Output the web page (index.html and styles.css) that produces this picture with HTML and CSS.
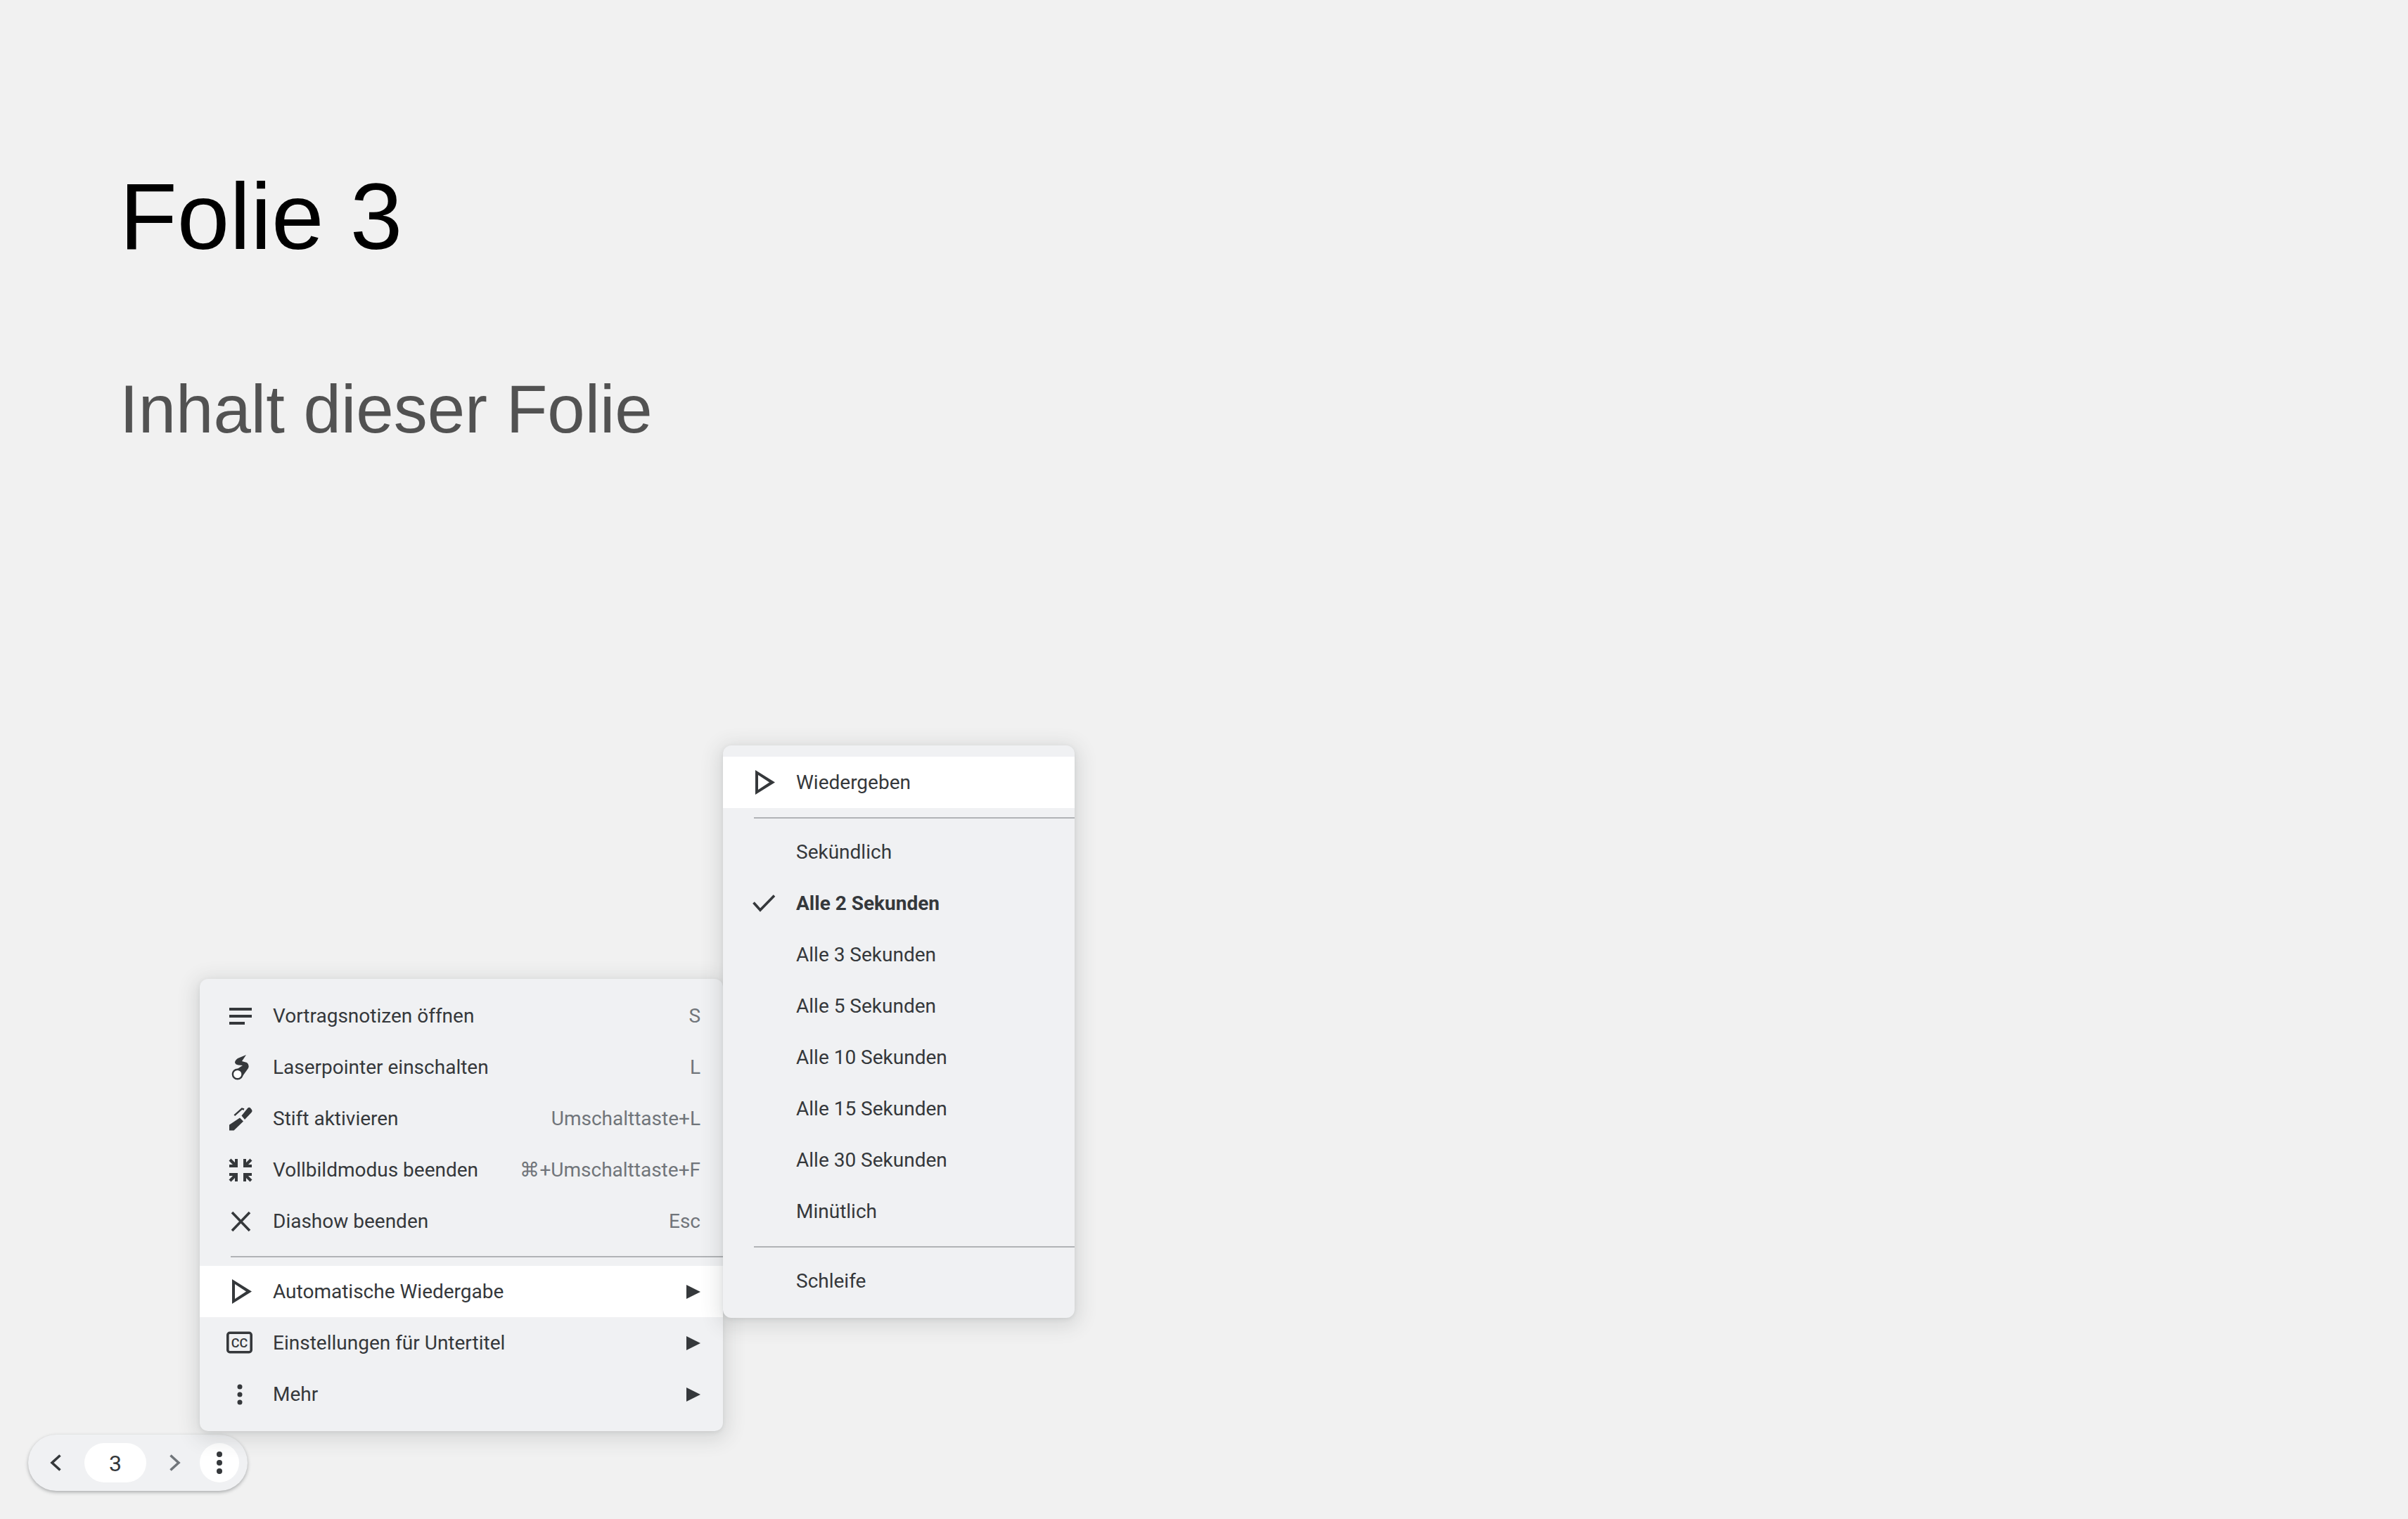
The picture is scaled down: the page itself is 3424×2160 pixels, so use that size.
FILE: index.html
```html
<!DOCTYPE html>
<html lang="de">
<head>
    <meta charset="UTF-8">
    <meta name="viewport" content="width=device-width, initial-scale=1.0">
    <title>Folie 3</title>
    <link rel="stylesheet" href="styles.css">
</head>
<body>
    <div class="slide">
        <h1>Folie 3</h1>
        <p>Inhalt dieser Folie</p>
    </div>

    <div class="nav-bar">
        <button class="nav-btn">
            <svg width="56" height="56" viewBox="0 0 56 56"><path class="line" d="M33.500 17.500 22 28l11.500 10.500"/></svg>
        </button>
        <div class="page-pill">3</div>
        <button class="nav-btn off">
            <svg width="56" height="56" viewBox="0 0 56 56"><path class="line" d="M22.500 17.500 34 28 22.500 38.500"/></svg>
        </button>
        <button class="nav-btn more">
            <svg width="56" height="56" viewBox="0 0 56 56"><circle class="fill" cx="28" cy="16" r="4"/><circle class="fill" cx="28" cy="28" r="4"/><circle class="fill" cx="28" cy="40" r="4"/></svg>
        </button>
    </div>

    <div class="menu main-menu">
        <div class="row">
            <span class="icon"><svg width="36" height="36" viewBox="0 0 36 36"><path class="fill" d="M2 6h32v4H2zM2 16h32v4H2zM2 26h22v4H2z"/></svg></span>
            <span class="label">Vortragsnotizen öffnen</span>
            <span class="key">S</span>
        </div>
        <div class="row">
            <span class="icon"><svg width="36" height="36" viewBox="0 0 36 36"><path class="fill" d="M26 0 14 5q-4 3-4 6 1 3 5 3.500l6 .5L9 23l10 10 10-14q2-5-2-8l-7-2z"/><circle cx="13.700" cy="27.500" r="6.800" fill="#fff" stroke="#35383b" stroke-width="2.400"/></svg></span>
            <span class="label">Laserpointer einschalten</span>
            <span class="key">L</span>
        </div>
        <div class="row">
            <span class="icon"><svg width="36" height="36" viewBox="0 0 36 36"><path class="fill" d="M2 34.500v-8l15-10 5 5-13.500 13zM19.500 13.500 28 3q2-2 4-.5L34 5q1.500 2-.5 4L24 19z"/><path class="line thin" d="M9.300 13.200 20 3.500l3 1"/></svg></span>
            <span class="label">Stift aktivieren</span>
            <span class="key">Umschalttaste+L</span>
        </div>
        <div class="row">
            <span class="icon"><svg width="36" height="36" viewBox="0 0 36 36"><path class="fill" d="M14 2v12H2v-4h5L1.500 4.500l3-3L10 7V2z"/><path class="fill" transform="matrix(-1 0 0 1 36 0)" d="M14 2v12H2v-4h5L1.500 4.500l3-3L10 7V2z"/><path class="fill" transform="matrix(1 0 0 -1 0 36)" d="M14 2v12H2v-4h5L1.500 4.500l3-3L10 7V2z"/><path class="fill" transform="matrix(-1 0 0 -1 36 36)" d="M14 2v12H2v-4h5L1.500 4.500l3-3L10 7V2z"/></svg></span>
            <span class="label">Vollbildmodus beenden</span>
            <span class="key">⌘+Umschalttaste+F</span>
        </div>
        <div class="row">
            <span class="icon"><svg width="36" height="36" viewBox="0 0 36 36"><path class="line" d="m6 5 25 26M31 5 6 31"/></svg></span>
            <span class="label">Diashow beenden</span>
            <span class="key">Esc</span>
        </div>
        <div class="divider"></div>
        <div class="row active">
            <span class="icon"><svg width="36" height="36" viewBox="0 0 36 36"><path class="fill" fill-rule="evenodd" d="M6 0v35l28-17.500zM10 7l16 10.500L10 28z"/></svg></span>
            <span class="label">Automatische Wiedergabe</span>
            <svg class="arrow" width="20" height="20" viewBox="0 0 20 20"><path class="fill" d="M0 0v20l20-10z"/></svg>
        </div>
        <div class="row">
            <span class="icon"><svg width="36" height="36" viewBox="0 0 36 36"><rect x="-0.200" y="3.300" width="33.400" height="27.400" rx="3" fill="none" stroke="#35383b" stroke-width="3.600"/><text class="cc" x="16.500" y="23.500" text-anchor="middle">CC</text></svg></span>
            <span class="label">Einstellungen für Untertitel</span>
            <svg class="arrow" width="20" height="20" viewBox="0 0 20 20"><path class="fill" d="M0 0v20l20-10z"/></svg>
        </div>
        <div class="row">
            <span class="icon"><svg width="36" height="36" viewBox="0 0 36 36"><circle class="fill" cx="17" cy="7" r="3.500"/><circle class="fill" cx="17" cy="18" r="3.500"/><circle class="fill" cx="17" cy="29" r="3.500"/></svg></span>
            <span class="label">Mehr</span>
            <svg class="arrow" width="20" height="20" viewBox="0 0 20 20"><path class="fill" d="M0 0v20l20-10z"/></svg>
        </div>
    </div>

    <div class="menu sub-menu">
        <div class="row active">
            <span class="icon"><svg width="36" height="36" viewBox="0 0 36 36"><path class="fill" fill-rule="evenodd" d="M6 0v35l28-17.500zM10 7l16 10.500L10 28z"/></svg></span>
            <span class="label">Wiedergeben</span>
        </div>
        <div class="divider"></div>
        <div class="row"><span class="icon"></span><span class="label">Sekündlich</span></div>
        <div class="row selected">
            <span class="icon"><svg width="36" height="36" viewBox="0 0 36 36"><path class="line" d="M3.500 16.500 13 27 33 6.500"/></svg></span>
            <span class="label">Alle 2 Sekunden</span>
        </div>
        <div class="row"><span class="icon"></span><span class="label">Alle 3 Sekunden</span></div>
        <div class="row"><span class="icon"></span><span class="label">Alle 5 Sekunden</span></div>
        <div class="row"><span class="icon"></span><span class="label">Alle 10 Sekunden</span></div>
        <div class="row"><span class="icon"></span><span class="label">Alle 15 Sekunden</span></div>
        <div class="row"><span class="icon"></span><span class="label">Alle 30 Sekunden</span></div>
        <div class="row"><span class="icon"></span><span class="label">Minütlich</span></div>
        <div class="divider"></div>
        <div class="row"><span class="icon"></span><span class="label">Schleife</span></div>
    </div>
</body>
</html>
```

FILE: styles.css
```css
html, body {
    margin: 0;
    padding: 0;
    height: 100%;
    overflow: hidden;
}
body {
    position: relative;
    background-color: #f1f1f1;
    font-family: Roboto, Arial, sans-serif;
    color: #35383b;
}
svg {
    display: block;
    overflow: visible;
}
.fill {
    fill: #35383b;
}
.line {
    fill: none;
    stroke: #35383b;
    stroke-width: 3.6;
}
.thin {
    stroke-width: 2.4;
}
.cc {
    font-family: Roboto, Arial, sans-serif;
    font-size: 18px;
    font-weight: 500;
    fill: #35383b;
}

/* slide */
.slide {
    padding: 232px 0 0 170px;
    font-family: "Liberation Sans", Arial, sans-serif;
}
.slide h1 {
    margin: 0 0 143px 0;
    font-size: 134px;
    font-weight: 400;
    line-height: 152px;
    color: #000;
}
.slide p {
    margin: 0;
    font-size: 96px;
    line-height: 110px;
    color: #525252;
}

/* bottom nav */
.nav-bar {
    position: absolute;
    left: 40px;
    top: 2040px;
    display: flex;
    align-items: center;
    gap: 12px;
    box-sizing: border-box;
    width: 312px;
    height: 80px;
    padding: 0 12px;
    background-color: #f0f1f3;
    border-radius: 40px;
    box-shadow: 0 2px 5px rgba(60, 64, 67, 0.4);
}
.nav-btn {
    flex: none;
    width: 56px;
    height: 56px;
    padding: 0;
    border: none;
    border-radius: 50%;
    background: none;
}
.nav-btn.off .line {
    stroke: #70757a;
}
.nav-btn.more {
    margin-left: -4px;
    background-color: #fff;
}
.page-pill {
    flex: none;
    width: 88px;
    height: 56px;
    border-radius: 28px;
    background-color: #fff;
    font-size: 32px;
    line-height: 58px;
    text-align: center;
}

/* menus */
.menu {
    position: absolute;
    box-sizing: border-box;
    padding: 16px 0;
    background-color: #f0f1f3;
    border-radius: 12px;
    box-shadow: 0 6px 28px 6px rgba(60, 64, 67, 0.14), 0 2px 6px rgba(60, 64, 67, 0.1);
}
.main-menu {
    left: 284px;
    top: 1392px;
    width: 744px;
}
.sub-menu {
    left: 1028px;
    top: 1060px;
    width: 500px;
}
.row {
    display: flex;
    align-items: center;
    height: 73px;
    padding: 0 32px 0 40px;
    font-size: 28px;
}
.row.active {
    background-color: #fff;
}
.row.selected .label {
    font-weight: 700;
}
.icon {
    flex: none;
    width: 36px;
    height: 36px;
    margin-right: 28px;
}
.label {
    flex: 1;
    white-space: nowrap;
}
.key {
    flex: none;
    color: #70757a;
}
.arrow {
    flex: none;
}
.divider {
    height: 2px;
    margin: 13px 0 12px 44px;
    background-color: #b1b3b6;
}
.sub-menu .divider {
    margin-bottom: 11px;
}
```
